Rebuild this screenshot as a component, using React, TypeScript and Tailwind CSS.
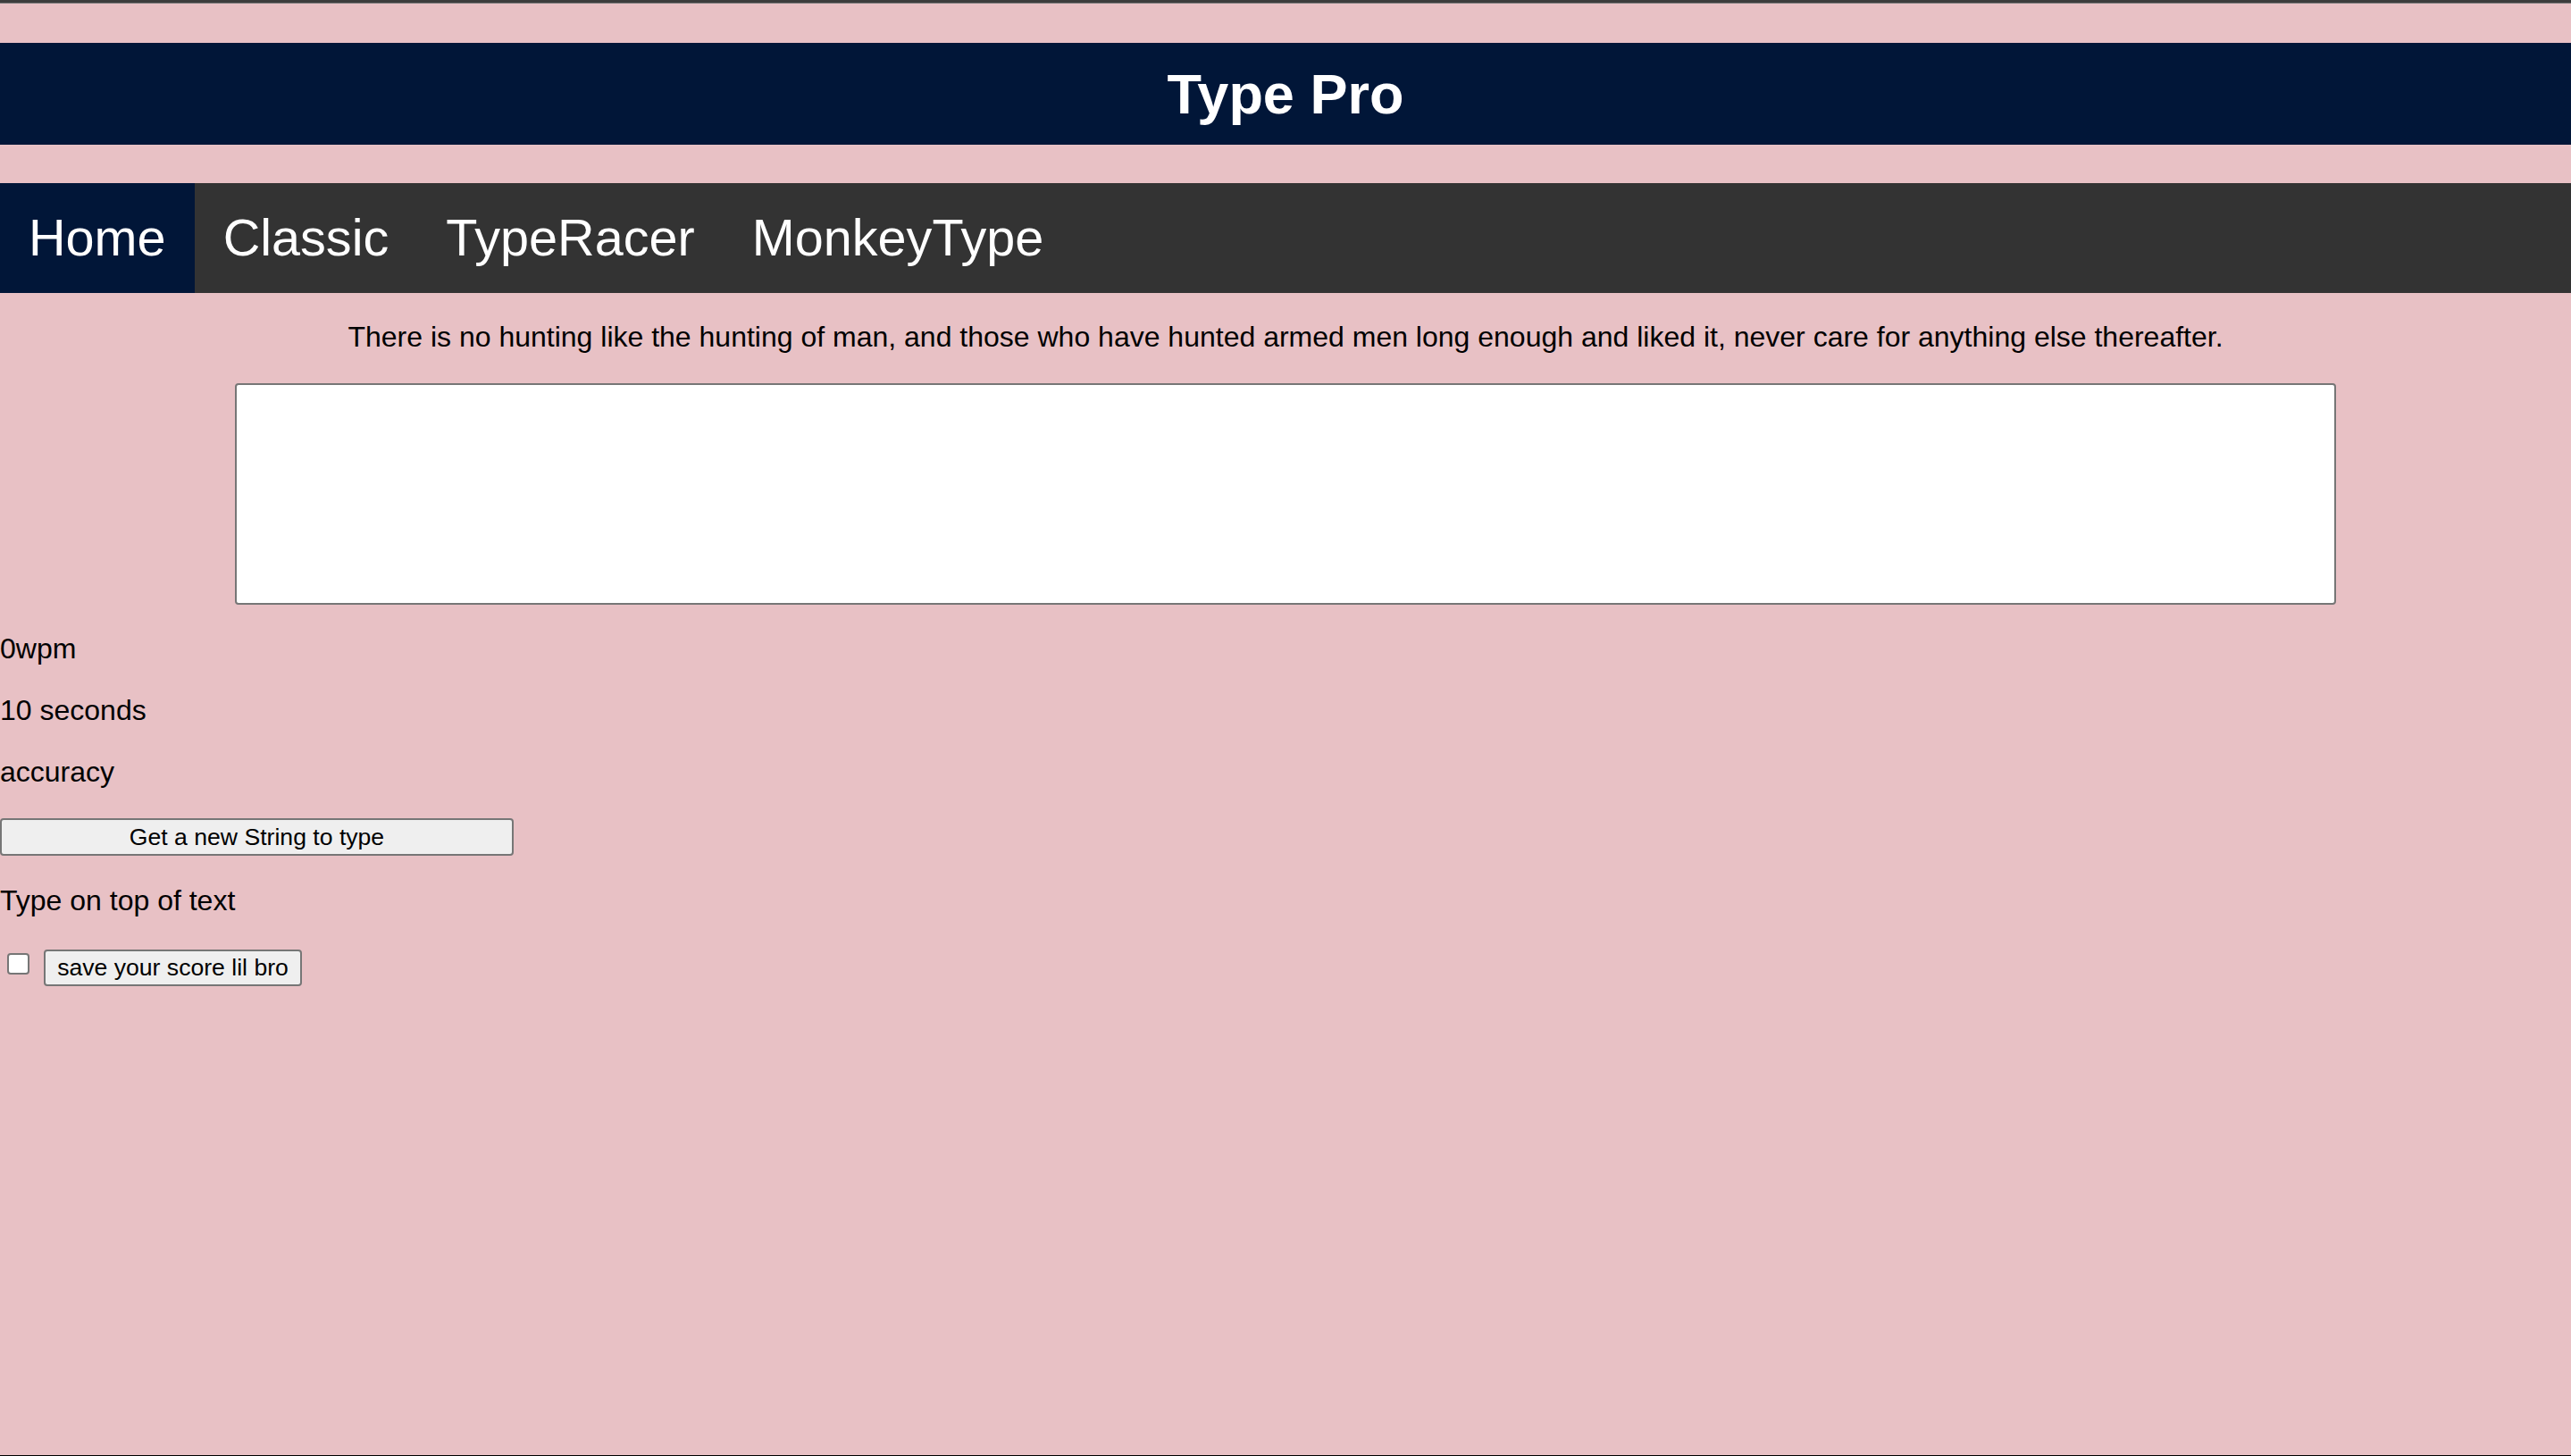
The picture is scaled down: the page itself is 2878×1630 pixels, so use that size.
import { useState } from 'react';

const navItems = ['Home', 'Classic', 'TypeRacer', 'MonkeyType'];

export default function App() {
  const [text, setText] = useState('');
  const [saved, setSaved] = useState(false);

  return (
    <div className="flex h-[1630px] flex-col overflow-hidden border-b border-black bg-[#e8c1c5] font-['Liberation_Sans',Arial,sans-serif] leading-[1.15] text-black">
      {/* window chrome line */}
      <div className="h-[3px] bg-[#3c3c3c]" />
      <div className="h-[1px] bg-[#7a7a7a]" />

      {/* title bar */}
      <header className="mt-[44px] flex h-[114px] items-center justify-center bg-[#011638]">
        <h1 className="text-[63px] font-bold leading-none text-white">Type Pro</h1>
      </header>

      {/* nav */}
      <nav className="mt-[43px] flex h-[123px] bg-[#333333]">
        {navItems.map((item, i) => (
          <a
            key={item}
            href="#"
            className={
              i === 0
                ? 'flex items-center bg-[#011638] px-[32px] text-[57.6px] text-white'
                : 'flex items-center px-[32px] text-[57.6px] text-white'
            }
          >
            {item}
          </a>
        ))}
      </nav>

      <p className="mt-[31px] text-center text-[32px]">
        There is no hunting like the hunting of man, and those who have hunted armed men long enough and liked it, never care for anything else thereafter.
      </p>

      <textarea
        value={text}
        onChange={(e) => setText(e.target.value)}
        className="mx-auto mt-[33.2px] block h-[248px] w-[2352px] resize-none rounded-[4px] border-2 border-[#767676] bg-white text-[28.8px] outline-none"
      />

      <div className="mt-[31.5px] flex flex-col gap-[32.2px] text-[32px]">
        <p>0wpm</p>
        <p>10 seconds</p>
        <p>accuracy</p>
      </div>

      <button className="mt-[32.7px] h-[42px] w-[575px] rounded-[4px] border-2 border-[#767676] bg-[#efefef] text-[26.6px] leading-none">
        Get a new String to type
      </button>

      <p className="mt-[32.5px] text-[32px]">Type on top of text</p>

      <div className="mt-[35.7px] flex items-start">
        <input
          type="checkbox"
          checked={saved}
          onChange={(e) => setSaved(e.target.checked)}
          className="ml-[8px] mt-[4px] h-[24px] w-[25px] appearance-none rounded-[4px] border-2 border-[#767676] bg-white"
        />
        <button className="ml-[16px] h-[41px] w-[289px] rounded-[4px] border-2 border-[#767676] bg-[#efefef] text-[26.6px] leading-none">
          save your score lil bro
        </button>
      </div>

      <div className="flex-1" />
    </div>
  );
}
